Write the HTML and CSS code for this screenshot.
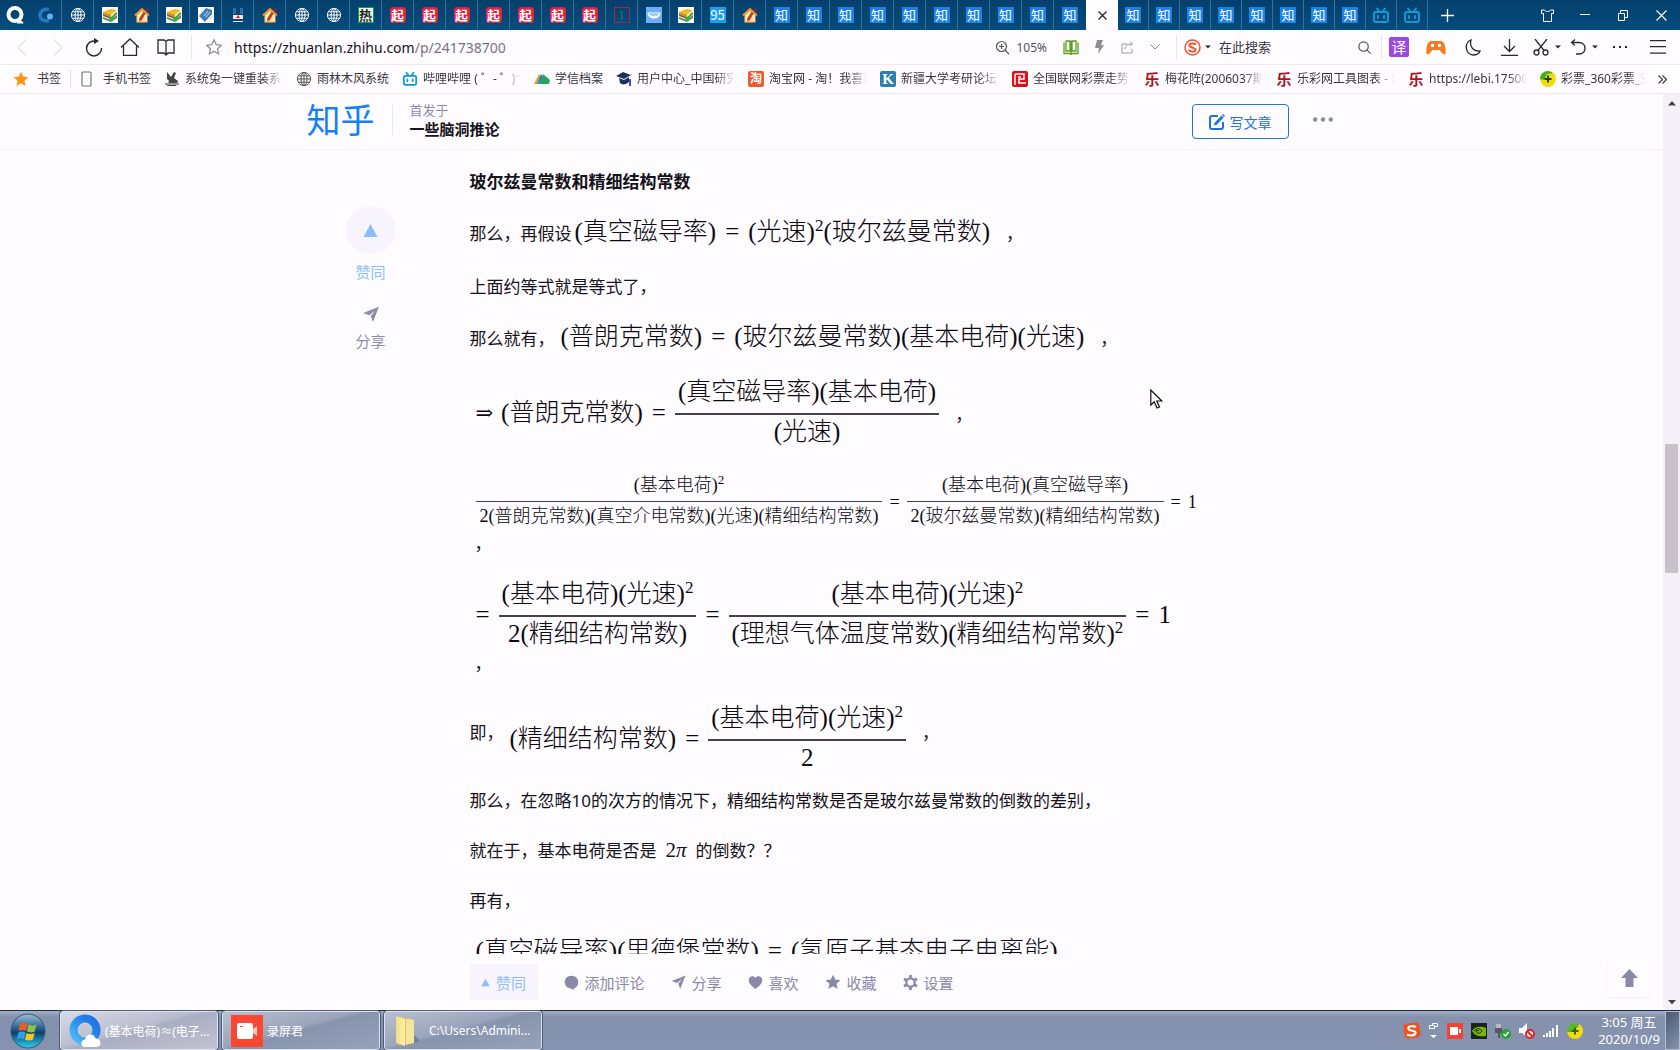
FILE: index.html
```
<!DOCTYPE html>
<html lang="zh-CN">
<head>
<meta charset="utf-8">
<title>一些脑洞推论 - 知乎</title>
<link rel="stylesheet" href="styles.css">
</head>
<body>
<svg class="defs" aria-hidden="true">
  <defs>
    <linearGradient id="orb" x1="0" y1="0" x2="0" y2="1"><stop offset="0" stop-color="#9fc0d8"/><stop offset=".45" stop-color="#1d5a8c"/><stop offset=".55" stop-color="#0d3f70"/><stop offset="1" stop-color="#29d3f5"/></linearGradient>
    <linearGradient id="ring" x1="0" y1="1" x2="1" y2="0"><stop offset="0" stop-color="#52c0f5"/><stop offset=".5" stop-color="#2b8df0"/><stop offset="1" stop-color="#1a6fe0"/></linearGradient>
    <linearGradient id="fold" x1="0" y1="0" x2="1" y2="0"><stop offset="0" stop-color="#f3dc83"/><stop offset="1" stop-color="#fff0b0"/></linearGradient>
  </defs>
  <symbol id="i-globe" viewBox="0 0 16 16"><g fill="none" stroke="currentColor" stroke-width="1"><circle cx="8" cy="8" r="6.600"/><ellipse cx="8" cy="8" rx="3" ry="6.600"/><path d="M8 1.400v13.200M1.400 8h13.200M2.400 4.800h11.200M2.400 11.200h11.200"/></g></symbol>
  <symbol id="i-books" viewBox="0 0 16 16"><path fill="#fff" d="M0 0h16v16H0z"/><path fill="#4f8f5a" d="M1 10l8 3 6-5v3l-6 4-8-3z"/><path fill="#8d5a35" d="M1 7l8 3 6-5v2l-6 5-8-3z"/><path fill="#f0bb25" d="M1 5l7-3 7 1-6 5z"/><path fill="#c98e18" d="M1 5l8 3v2L1 7z"/><path fill="none" stroke="#3cae3c" stroke-width="2" d="M7 10l2 3 5-7"/></symbol>
  <symbol id="i-house" viewBox="0 0 16 16"><path fill="#fff" stroke="#f08a1c" stroke-width="1.400" d="M3 8v7h10V8"/><path fill="#fbe6c0" d="M3 8l5-5 5 5v6.500H3z"/><path fill="none" stroke="#f39a1f" stroke-width="2" d="M1 8.500L8 2l7 6.500"/><path fill="#7a1d66" d="M12 1h3l-1 4-2-1z"/><path fill="#c23a12" d="M9.500 5l2 1.500-4 7L5 14l.5-3z"/></symbol>
  <symbol id="i-bili" viewBox="0 0 18 17"><g fill="none" stroke="currentColor" stroke-width="2" stroke-linecap="round"><rect x="2" y="5" width="14" height="10" rx="2"/><path d="M5 1.500L7 4M13 1.500L11 4M6 9v2M12 9v2"/></g></symbol>
  <symbol id="i-star" viewBox="0 0 16 16"><path d="M8 .8l2.200 4.800 5.200.6-3.900 3.500 1.100 5.200L8 12.300l-4.600 2.600 1.100-5.200L.6 6.200l5.200-.6z"/></symbol>
  <symbol id="i-plane" viewBox="0 0 16 16"><path d="M.6 6.500L15.500.6 9.800 15l-2-5.600L12 4.200 6.400 8.600z"/></symbol>
  <symbol id="i-search" viewBox="0 0 16 16"><g fill="none" stroke="currentColor" stroke-width="1.300"><circle cx="7" cy="7" r="5"/><path d="M10.600 10.600L14.500 14.500"/></g></symbol>
  <symbol id="i-up" viewBox="0 0 14 12"><path d="M7 0l6.500 12H.5z"/></symbol>
  <symbol id="i-caret" viewBox="0 0 8 5"><path d="M0 0h8L4 4.500z"/></symbol>
</svg>

<nav class="tabs" aria-label="标签页">
  <a class="home" href="#"><svg width="18" height="18" viewBox="0 0 18 18"><circle cx="9" cy="8.500" r="6.500" fill="none" stroke="#fff" stroke-width="4"/><path fill="#fff" d="M11 17.500c0-4 6-4 6.500 0z"/></svg></a>
  <a class="tab" href="#"><svg width="17" height="17" viewBox="0 0 17 17"><path fill="none" stroke="#2678c4" stroke-width="3.500" d="M12 2.500C7 1.500 3 4 3 8.500S7 14 12 14"/><circle cx="13" cy="9.500" r="3" fill="#5fb4f0"/></svg></a>
  <a class="tab" href="#"><svg width="16" height="16"><use href="#i-globe"/></svg></a>
  <a class="tab" href="#"><svg width="16" height="16"><use href="#i-books"/></svg></a>
  <a class="tab" href="#"><svg width="16" height="16"><use href="#i-house"/></svg></a>
  <a class="tab" href="#"><svg width="16" height="16"><use href="#i-books"/></svg></a>
  <a class="tab" href="#"><svg width="16" height="16" viewBox="0 0 16 16"><path fill="#fff" d="M0 0h16v16H0z"/><path fill="#3f7fb5" d="M1 9L8 1l6 2v4l-7 8z"/><path fill="none" stroke="#b9d6ec" d="M6 9l4-5M8 10l4-5M12 12l3-3"/></svg></a>
  <a class="tab" href="#"><svg width="16" height="16" viewBox="0 0 16 16"><path fill="#2b6ea8" d="M3 1h3v6H3zM10 1h3v6h-3z"/><path fill="#f3e6ea" d="M3 8h10v4H3zM3 14h10v1H3z"/><path fill="#d02030" d="M6 11l2-3 2 3z"/></svg></a>
  <a class="tab" href="#"><svg width="16" height="16"><use href="#i-house"/></svg></a>
  <a class="tab" href="#"><svg width="16" height="16"><use href="#i-globe"/></svg></a>
  <a class="tab" href="#"><svg width="16" height="16"><use href="#i-globe"/></svg></a>
  <a class="tab" href="#"><span class="fav hot">热</span></a>
  <a class="tab" href="#"><span class="fav qi">起</span></a>
  <a class="tab" href="#"><span class="fav qi">起</span></a>
  <a class="tab" href="#"><span class="fav qi">起</span></a>
  <a class="tab" href="#"><span class="fav qi">起</span></a>
  <a class="tab" href="#"><span class="fav qi">起</span></a>
  <a class="tab" href="#"><span class="fav qi">起</span></a>
  <a class="tab" href="#"><span class="fav qi">起</span></a>
  <a class="tab" href="#"><span class="fav one">1</span></a>
  <a class="tab" href="#"><svg width="16" height="16" viewBox="0 0 16 16"><path fill="#6bb0f5" d="M0 0h16v16H0z"/><path fill="#fff" d="M1.500 5.500h13c0 8-13 8-13 0z"/><path fill="none" stroke="#6bb0f5" d="M3 7h10M5 9l1-2 2 2 2-2 1 2"/></svg></a>
  <a class="tab" href="#"><svg width="16" height="16"><use href="#i-books"/></svg></a>
  <a class="tab" href="#"><span class="fav nf">95</span></a>
  <a class="tab" href="#"><svg width="16" height="16"><use href="#i-house"/></svg></a>
  <a class="tab" href="#"><span class="fav zh">知</span></a>
  <a class="tab" href="#"><span class="fav zh">知</span></a>
  <a class="tab" href="#"><span class="fav zh">知</span></a>
  <a class="tab" href="#"><span class="fav zh">知</span></a>
  <a class="tab" href="#"><span class="fav zh">知</span></a>
  <a class="tab" href="#"><span class="fav zh">知</span></a>
  <a class="tab" href="#"><span class="fav zh">知</span></a>
  <a class="tab" href="#"><span class="fav zh">知</span></a>
  <a class="tab" href="#"><span class="fav zh">知</span></a>
  <a class="tab last" href="#"><span class="fav zh">知</span></a>
  <button class="tab active" aria-label="关闭标签"><svg width="9" height="9" viewBox="0 0 9 9"><path stroke="#222" stroke-width="1.200" d="M.5.5l8 8M8.500.5l-8 8"/></svg></button>
  <a class="tab slim" href="#"><span class="fav zh">知</span></a>
  <a class="tab slim" href="#"><span class="fav zh">知</span></a>
  <a class="tab slim" href="#"><span class="fav zh">知</span></a>
  <a class="tab slim" href="#"><span class="fav zh">知</span></a>
  <a class="tab slim" href="#"><span class="fav zh">知</span></a>
  <a class="tab slim" href="#"><span class="fav zh">知</span></a>
  <a class="tab slim" href="#"><span class="fav zh">知</span></a>
  <a class="tab slim" href="#"><span class="fav zh">知</span></a>
  <a class="tab slim bili" href="#"><svg width="18" height="17"><use href="#i-bili"/></svg></a>
  <a class="tab slim bili" href="#"><svg width="18" height="17"><use href="#i-bili"/></svg></a>
  <button class="win" aria-label="新标签"><svg width="13" height="13" viewBox="0 0 13 13"><path stroke="#fff" stroke-width="1.300" d="M6.500 0v13M0 6.500h13"/></svg></button>
  <span class="grow"></span>
  <button class="win" aria-label="皮肤"><svg width="13" height="13" viewBox="0 0 13 13"><path fill="none" stroke="#fff" d="M.5 1h3c1 2 5 2 6 0h3v3.500h-2v8h-8v-8h-2z"/></svg></button>
  <button class="win" aria-label="最小化"><svg width="10" height="2"><path fill="#fff" d="M0 0h10v1H0z"/></svg></button>
  <button class="win" aria-label="还原"><svg width="10" height="11" viewBox="0 0 10 11"><path fill="none" stroke="#fff" d="M.5 3.500h6v7h-6zM2.500 3.500v-3h7v7h-3"/></svg></button>
  <button class="win" aria-label="关闭"><svg width="11" height="11" viewBox="0 0 11 11"><path stroke="#fff" stroke-width="1.200" d="M.5.5l10 10M10.500.5l-10 10"/></svg></button>
</nav>

<div class="address">
  <button class="nav off" aria-label="后退"><svg width="10" height="17" viewBox="0 0 10 17"><path fill="none" stroke="currentColor" d="M9 .5l-8 8 8 8"/></svg></button>
  <button class="nav off" aria-label="前进"><svg width="10" height="17" viewBox="0 0 10 17"><path fill="none" stroke="currentColor" d="M1 .5l8 8-8 8"/></svg></button>
  <button class="nav" aria-label="刷新"><svg width="18" height="19" viewBox="0 0 18 19"><path fill="none" stroke="currentColor" stroke-width="1.400" d="M10 3A7.500 7.500 0 1 0 16.500 10"/><path d="M9 0l5 3-5 3z"/></svg></button>
  <button class="nav" aria-label="主页"><svg width="20" height="18" viewBox="0 0 20 18"><path fill="none" stroke="currentColor" stroke-width="1.300" d="M1 9.500L10 1l9 8.500M3.500 8v9.300h13V8"/></svg></button>
  <button class="nav" aria-label="书签"><svg width="18" height="17" viewBox="0 0 18 17"><path fill="none" stroke="currentColor" stroke-width="1.300" d="M1 1h6l2 1.500L11 1h6v13h-6l-2 2-2-2H1zM9 2.500V16"/></svg></button>
  <span class="rule"></span>
  <button class="fave" aria-label="收藏"><svg width="16" height="16" fill="none" stroke="#8c8a92" stroke-width="1.200"><use href="#i-star"/></svg></button>
  <a class="url" href="#"><span>https://zhuanlan.zhihu.com</span>/p/241738700</a>
  <button class="zoom"><svg width="15" height="15" viewBox="0 0 15 15"><g fill="none" stroke="#555" stroke-width="1.200"><circle cx="6.500" cy="6.500" r="5"/><path d="M10 10l4 4M4 6.500h5M6.500 4v5"/></g></svg>105%</button>
  <button class="tool" aria-label="阅读"><svg width="16" height="15" viewBox="0 0 16 15"><path fill="none" stroke="#5b9f1e" stroke-width="1.300" d="M3 1h4v10H3zM9 1h4v10H9zM1 2.500v11h6l1 1 1-1h6v-11M8 1v12"/></svg></button>
  <button class="tool" aria-label="极速"><svg width="9" height="14" viewBox="0 0 9 14"><path fill="#8f8b92" d="M2 0h6L6 5h3L3 14l1-6H0z"/></svg></button>
  <button class="tool" aria-label="分享"><svg width="13" height="13" viewBox="0 0 13 13"><path fill="none" stroke="#9a979e" d="M6 3H1v9h10V8M4 8c0-4 3-5 7-5M9 .5L11.500 3 9 5.500"/></svg></button>
  <button class="tool" aria-label="更多"><svg width="10" height="6" viewBox="0 0 10 6"><path fill="none" stroke="#8a878e" d="M.5.5L5 5 9.500.5"/></svg></button>
  <span class="rule"></span>
  <button class="sogou" aria-label="搜索引擎"><svg width="17" height="17" viewBox="0 0 17 17"><circle cx="8.500" cy="8.500" r="7.500" fill="none" stroke="#f0562d" stroke-width="1.500"/><path fill="none" stroke="#f0562d" stroke-width="2" d="M12 5.500C9 3.500 5 4.500 5.500 6.800S12 8.500 11.500 11 7 13 4.500 11"/></svg><svg width="6" height="4" viewBox="0 0 8 5"><use href="#i-caret"/></svg></button>
  <input class="search" type="text" aria-label="搜索" placeholder="在此搜索">
  <button class="tool" aria-label="搜索"><svg width="15" height="15"><use href="#i-search"/></svg></button>
  <span class="rule tight"></span>
  <button class="ext" aria-label="翻译"><span class="yi">译</span></button>
  <button class="ext" aria-label="游戏"><svg width="20" height="15" viewBox="0 0 20 15"><path fill="#f47c20" d="M5 1h10c4 1 5 7 4.500 13-3 1-4-2-6-4h-7c-2 2-3 5-6 4C0 8 1 2 5 1z"/><path fill="#fff" d="M5 4h3v3H5zM12 4h3v3h-3z"/></svg></button>
  <button class="ext" aria-label="夜间"><svg width="16" height="17" viewBox="0 0 16 17"><path fill="none" stroke="currentColor" stroke-width="1.300" d="M6 1C-1 4 0 15 8 16c3 0 6-1 7-4C9 13 4 8 6 1z"/></svg></button>
  <button class="ext" aria-label="下载"><svg width="17" height="17" viewBox="0 0 17 17"><path fill="none" stroke="currentColor" stroke-width="1.300" d="M8.500 0v12M3 7l5.500 5.500L14 7M0 16.300h17"/></svg></button>
  <button class="ext" aria-label="截图"><svg width="16" height="17" viewBox="0 0 16 17"><g fill="none" stroke="currentColor" stroke-width="1.300"><path d="M2 0l9.500 12M14 0L4.500 12"/><circle cx="3.500" cy="13.500" r="2.500"/><circle cx="12.500" cy="13.500" r="2.500"/></g></svg><svg width="6" height="4" viewBox="0 0 8 5"><use href="#i-caret"/></svg></button>
  <button class="ext" aria-label="恢复"><svg width="16" height="16" viewBox="0 0 16 16"><path fill="none" stroke="currentColor" stroke-width="1.300" d="M2 3.500h7c8 0 8 11.500 0 11.500H6M5 .5l-3.500 3 3.500 3"/></svg><svg width="6" height="4" viewBox="0 0 8 5"><use href="#i-caret"/></svg></button>
  <button class="ext" aria-label="更多"><svg width="15" height="3" viewBox="0 0 15 3"><path d="M0 0h2v2H0zM6 0h2v2H6zM12 0h2v2h-2z"/></svg></button>
  <button class="ext" aria-label="菜单"><svg width="16" height="14" viewBox="0 0 16 14"><path d="M0 0h16v1.300H0zM0 6h16v1.300H0zM0 12.500h16v1.300H0z"/></svg></button>
</div>

<nav class="marks" aria-label="书签栏">
  <a class="mark first" href="#"><svg width="16" height="16" fill="#ff9412"><use href="#i-star"/></svg><span>书签</span></a>
  <a class="mark phone" href="#"><svg width="16" height="16" viewBox="0 0 16 16"><rect x="4" y="1" width="9" height="14" rx="1" fill="none" stroke="#777" stroke-width="1.200"/></svg><span>手机书签</span></a>
  <a class="mark" href="#"><svg width="16" height="16" viewBox="0 0 16 16"><path fill="#444" d="M3 1l4 5 3-5 2 1-2 5 4 3-2 5H3l2-5-2-2z"/><path fill="#999" d="M1 12h14v2H1z"/></svg><span class="fade">系统兔一键重装系统</span></a>
  <a class="mark" href="#"><svg width="16" height="16" color="#555"><use href="#i-globe"/></svg><span>雨林木风系统</span></a>
  <a class="mark" href="#"><svg width="16" height="16" color="#0d9bd6"><use href="#i-bili"/></svg><span class="fade">哔哩哔哩 ( ゜- ゜)つロ</span></a>
  <a class="mark" href="#"><svg width="16" height="16" viewBox="0 0 16 16"><path fill="#e5a52c" d="M0 13L5 3l2 2-4 8z"/><path fill="#3c78c0" d="M3 13L7 3l2 3-4 7z"/><path fill="#25a468" d="M5 13L9 3l7 6-1 4z"/></svg><span>学信档案</span></a>
  <a class="mark" href="#"><svg width="16" height="16" viewBox="0 0 16 16"><path fill="#1d3357" d="M0 5l7-4 8 3-7 4zM3 7l5 2 5-3v5c-3 3-7 3-9 1z"/><path fill="#3a4fd0" d="M13 8h2v7h-2z"/></svg><span class="fade">用户中心_中国研究生</span></a>
  <a class="mark" href="#"><span class="chip tao">淘</span><span class="fade">淘宝网 - 淘！我喜欢</span></a>
  <a class="mark" href="#"><span class="chip kk">K</span><span class="fade">新疆大学考研论坛_新</span></a>
  <a class="mark" href="#"><svg width="16" height="16" viewBox="0 0 16 16"><rect width="16" height="16" rx="2" fill="#d81118"/><path fill="none" stroke="#fff" stroke-width="1.500" d="M3 14V4q0-1 1-1h8v5H7v4h7M6 6h3"/></svg><span class="fade">全国联网彩票走势图</span></a>
  <a class="mark" href="#"><span class="chip le">乐</span><span class="fade">梅花阵(2006037期)</span></a>
  <a class="mark" href="#"><span class="chip le">乐</span><span class="fade">乐彩网工具图表 - 乐</span></a>
  <a class="mark" href="#"><span class="chip le">乐</span><span class="fade">https://lebi.17500.cn</span></a>
  <a class="mark" href="#"><svg width="16" height="16" viewBox="0 0 16 16"><circle cx="8" cy="8" r="8" fill="#f5d90a"/><path fill="#3fae2a" d="M8 0a8 8 0 0 0-8 8l4 1 3-6 6-.8A8 8 0 0 0 8 0z"/><path stroke="#14471a" stroke-width="2" d="M8 4.500v7M4.500 8h7"/></svg><span class="fade short">彩票_360彩票_安全</span></a>
  <button class="more" aria-label="更多书签"><svg width="9" height="9" viewBox="0 0 9 9"><path fill="none" stroke="#333" stroke-width="1.100" d="M.5.500l4 4-4 4M4.500.5l4 4-4 4"/></svg></button>
</nav>

<div class="view">
  <div class="page">
    <header class="top">
      <div class="inner">
        <a class="logo" href="#">知乎</a>
        <div class="column"><span>首发于</span><a href="#">一些脑洞推论</a></div>
        <span class="grow"></span>
        <button class="write"><svg width="16" height="16" viewBox="0 0 16 16"><path fill="none" stroke="currentColor" stroke-width="2" d="M9 2H3Q1 2 1 4v9q0 2 2 2h9q2 0 2-2V8"/><path d="M12.500 1.500l2 2L7.500 11 5 11.500l.5-2.500zM14 0l2 2-1 1-2-2z" fill="currentColor"/></svg>写文章</button>
        <button class="dots" aria-label="更多"><svg width="20" height="5" viewBox="0 0 20 5" fill="#8f8ba0"><circle cx="2.200" cy="2.500" r="2.200"/><circle cx="10" cy="2.500" r="2.200"/><circle cx="17.800" cy="2.500" r="2.200"/></svg></button>
      </div>
    </header>

    <main class="body">
      <aside class="side">
        <button class="vote"><span class="disc"><svg width="15" height="13"><use href="#i-up"/></svg></span>赞同</button>
        <button class="share"><svg width="18" height="17"><use href="#i-plane"/></svg>分享</button>
      </aside>
      <article class="text">
        <h3>玻尔兹曼常数和精细结构常数</h3>
        <p class="line">那么，再假设<span class="math near">(真空磁导率)<i>=</i>(光速)<sup>2</sup>(玻尔兹曼常数)</span>，</p>
        <p>上面约等式就是等式了，</p>
        <p class="line">那么就有，<span class="math">(普朗克常数)<i>=</i>(玻尔兹曼常数)(基本电荷)(光速)</span>，</p>
        <p><span class="math roomy"><b>⇒</b>(普朗克常数)<i>=</i><span class="frac"><span>(真空磁导率)(基本电荷)</span><span>(光速)</span></span></span>，</p>
        <p class="wide"><span class="math small"><span class="frac"><span>(基本电荷)<sup>2</sup></span><span>2(普朗克常数)(真空介电常数)(光速)(精细结构常数)</span></span><i>=</i><span class="frac"><span>(基本电荷)(真空磁导率)</span><span>2(玻尔兹曼常数)(精细结构常数)</span></span><i>=</i>1</span><span class="tail">，</span></p>
        <p class="wide"><span class="math lead"><i>=</i><span class="frac"><span>(基本电荷)(光速)<sup>2</sup></span><span>2(精细结构常数)</span></span><i>=</i><span class="frac"><span>(基本电荷)(光速)<sup>2</sup></span><span>(理想气体温度常数)(精细结构常数)<sup>2</sup></span></span><i>=</i>1</span><span class="tail">，</span></p>
        <p class="drop">即，<span class="math">(精细结构常数)<i>=</i><span class="frac"><span>(基本电荷)(光速)<sup>2</sup></span><span>2</span></span></span>，</p>
        <p>那么，在忽略10的次方的情况下，精细结构常数是否是玻尔兹曼常数的倒数的差别，</p>
        <p>就在于，基本电荷是否是<span class="pi">2<em>π</em></span>的倒数？？</p>
        <p>再有，</p>
        <p class="line"><span class="math">(真空磁导率)(里德堡常数)<i>=</i>(氢原子基态电子电离能)</span>，</p>
      </article>
      <svg class="cursor" width="13" height="20" viewBox="0 0 13 20"><path fill="#fff" stroke="#111" stroke-width="1.200" d="M.8 1v15l3.500-3.300L7 19l2.500-1-2.700-6h5z"/></svg>
    </main>

    <footer class="actions">
      <div class="bar">
        <button class="agree"><svg width="9" height="9"><use href="#i-up"/></svg>赞同</button>
        <button><svg width="15" height="15" viewBox="0 0 16 16"><path d="M8 .8C3.500.8.800 4 .8 7.500S3 14 7 14.500l3.500 1.300.3-1.500C14 13 15.200 10.500 15.200 7.500 15.200 4 12.500.8 8 .8z"/></svg>添加评论</button>
        <button><svg width="15" height="15"><use href="#i-plane"/></svg>分享</button>
        <button><svg width="15" height="15" viewBox="0 0 16 16"><path d="M8 15C3 11 .8 8.500.8 5.200.8 1 6 0 8 3c2-3 7.200-2 7.200 2.200C15.200 8.500 13 11 8 15z"/></svg>喜欢</button>
        <button><svg width="16" height="16"><use href="#i-star"/></svg>收藏</button>
        <button><svg width="15" height="15" viewBox="0 0 16 16"><circle cx="8" cy="8" r="4.500" fill="none" stroke="currentColor" stroke-width="2.400"/><path d="M6.500 0h3v3h-3zM6.500 13h3v3h-3zM.3 5.300l1.500-2.600 2.600 1.500-1.500 2.600zM11.600 11.800l1.500-2.600 2.600 1.500-1.500 2.600zM1.800 13.300L.3 10.700l2.600-1.500 1.500 2.600zM13.100 6.800l-1.500-2.600 2.600-1.500 1.500 2.600z"/></svg>设置</button>
      </div>
      <button class="totop" aria-label="回到顶部"><svg width="17" height="18" viewBox="0 0 17 18"><path d="M8.500 0L17 9h-4.500v9h-8V9H0z"/></svg></button>
    </footer>
  </div>
  <div class="scroll"><svg width="8" height="5" viewBox="0 0 8 5"><path d="M4 0l4 4.500H0z"/></svg><span class="before"></span><span class="thumb"></span><span class="after"></span><svg width="8" height="5"><use href="#i-caret"/></svg></div>
</div>

<div class="taskbar">
  <button class="start" aria-label="开始"><svg width="36" height="36" viewBox="0 0 36 36"><circle cx="18" cy="18" r="17" fill="url(#orb)" stroke="#38536f"/><path fill="#ee5a24" d="M10 11c3-2 5-1 7.500 0l-1.500 7c-3-1.500-5-1.500-7.500 0z"/><path fill="#8cc63f" d="M18.500 11.500c3 1.500 5 1.500 8 0l-1.800 7c-3 1.500-5 1-7.700 0z"/><path fill="#2fa0e8" d="M8.200 19.500c3-1.500 5-1.500 7.500 0l-1.700 6.500c-2.500-1-4.500-1-7 .5z"/><path fill="#fbc61a" d="M16.700 20c2.500 1 5 1.500 8 0l-1.800 6.500c-3 1.500-5.500 1-8 0z"/></svg></button>
  <button class="task on"><svg width="32" height="34" viewBox="0 0 32 34"><circle cx="16" cy="16" r="11.500" fill="none" stroke="url(#ring)" stroke-width="8"/><path fill="#fff" d="M16 33c-5 0-5-7 0-7.500 1-6 9-7 10.500-1 6-.5 7 8.500 1 8.500z"/></svg><span>(基本电荷)≈(电子...</span></button>
  <button class="task"><svg width="32" height="32" viewBox="0 0 32 32"><path fill="#fb4632" d="M0 0h32v32H0z"/><rect x="6" y="8" width="16" height="16" rx="2" fill="#fff"/><path fill="#fbc5bd" d="M22 14l4-3v10l-4-3z"/><path fill="#fb4632" d="M9 11h3v1H9z"/></svg><span>录屏君</span></button>
  <button class="task wide-gap"><svg width="28" height="32" viewBox="0 0 28 32"><path fill="#57627a" opacity=".5" d="M14 30l13-4-5-6z"/><path fill="#e4c45c" d="M6 2l13 2v24L6 30z"/><path fill="url(#fold)" d="M3 1l9 3v27l-9-3z"/><path fill="#f7e49a" d="M13 4l8 1v23l-8 2z"/></svg><span>C:\Users\Admini...</span></button>
  <span class="grow"></span>
  <div class="tray">
    <svg width="18" height="18" viewBox="0 0 18 18"><rect x="1" y="1" width="16" height="15" rx="3" fill="#f2501f" transform="rotate(-8 9 9)"/><path fill="none" stroke="#fff" stroke-width="2.200" d="M13 5C9 3 4.500 4.500 5.500 7s7.500 1 7 4-6 3-8.500 1.500"/></svg>
    <svg width="10" height="18" viewBox="0 0 10 18"><path fill="none" stroke="#fff" d="M.5 3.500h5v3h-5zM3.500 3.500v-2h5v3h-3"/><path fill="#fff" d="M1 13h7l-3.500 3z"/></svg>
    <svg width="16" height="16" viewBox="0 0 16 16"><path fill="#f2442f" d="M0 0h16v16H0z"/><path fill="#fff" d="M3 4h8v8H3zM12 6h2v4h-2z"/></svg>
    <svg width="16" height="16" viewBox="0 0 16 16"><path fill="#1c2418" d="M0 0h16v16H0z"/><path fill="#76b900" d="M1 8c3-5 9-5 14-3v8C9 14 4 13 1 8z"/><path fill="none" stroke="#1c2418" d="M3 8c3-3 6-3 8 0-2 3-5 3-6 0 1-1 3-1 3 0"/></svg>
    <svg width="16" height="16" viewBox="0 0 16 16"><path fill="#b9bcc2" d="M1 1h5v4H1z"/><path fill="#555b66" d="M0 5h7v5H5v5H3v-5H0z"/><circle cx="11" cy="11" r="5" fill="#27a333"/><path fill="none" stroke="#fff" stroke-width="1.400" d="M8.500 11l2 2 3-4"/></svg>
    <svg width="16" height="16" viewBox="0 0 16 16"><path fill="#fff" d="M0 5h3l5-5v14l-5-4H0z"/><circle cx="11" cy="11" r="4" fill="#fff" stroke="#e02424" stroke-width="2"/><path stroke="#e02424" stroke-width="2" d="M8 8l6 6"/></svg>
    <svg width="16" height="14" viewBox="0 0 16 14"><path fill="#fff" d="M0 11h2v2H0zM3 9h2v4H3zM6 7h2v6H6zM9 4h2v9H9zM13 1h2v12h-2z"/></svg>
    <svg width="16" height="16" viewBox="0 0 16 16"><circle cx="8" cy="8" r="8" fill="#f5d90a"/><path fill="#57b52f" d="M0 9a8 8 0 0 1 12-8l-1 3-7 5z"/><path stroke="#2a6a1a" stroke-width="2" d="M8 4.500v7M4.500 8h7"/></svg>
  </div>
  <div class="clock"><time>3:05 周五</time><time>2020/10/9</time></div>
  <button class="desktop" aria-label="显示桌面"></button>
</div>
</body>
</html>
```
FILE: styles.css
```
* { box-sizing: border-box; }

body {
  margin: 0;
  height: 100vh;
  display: flex;
  flex-direction: column;
  overflow: hidden;
  background: #fefcff;
  color: #16131a;
  font-family: "Noto Sans", "Noto Sans CJK SC", sans-serif;
  font-size: 12px;
}

a { color: inherit; text-decoration: none; }

button {
  margin: 0;
  padding: 0;
  border: 0;
  background: none;
  color: inherit;
  font: inherit;
  fill: currentColor;
  display: flex;
  align-items: center;
  justify-content: center;
}

svg { display: block; flex: none; }

.defs { position: absolute; width: 0; height: 0; }
.grow { flex: 1; }

/* tab strip */
.tabs {
  display: flex;
  flex: none;
  height: 30px;
  background: linear-gradient(#043f6c, #064d7f);
  color: #fff;
}
.home { width: 30px; display: flex; align-items: center; justify-content: center; }
.tab {
  width: 32px;
  display: flex;
  align-items: center;
  justify-content: center;
  border-right: 1px solid #3a7099;
}
.tab.last { border-right: 0; }
.tab.slim { width: 31px; }
.tab.active { background: #fefcff; border: 0; }
.bili { color: #0d9bd6; }
.fav {
  width: 16px;
  height: 16px;
  line-height: 16px;
  font-size: 13px;
  text-align: center;
  font-family: "Noto Sans CJK SC", sans-serif;
}
.zh { background: #1c82e6; }
.qi { background: #e02040; border-radius: 3px; font-weight: 700; }
.hot { background: #e8f5ea; color: #1b2a20; font-weight: 700; outline: 1px solid #20915a; outline-offset: -1px; }
.one { color: #2d7a58; outline: 1px solid #a32846; outline-offset: -1px; font-family: "Liberation Serif", serif; }
.nf { background: #1a9ef0; }
.win { width: 38px; }

/* address row */
.address {
  display: flex;
  align-items: center;
  flex: none;
  height: 35px;
  padding: 0 4px;
  border-bottom: 1px solid #f0e8f0;
  color: #2b282e;
}
.nav { width: 36px; }
.nav.off { color: #cfc8d0; }
.rule { width: 1px; height: 24px; background: #ece4ec; margin: 0 7px; }
.rule.tight { margin-left: 3px; }
.fave { width: 30px; }
.url { flex: 1; padding-left: 5px; font-size: 14px; color: #77737c; }
.url span { color: #16131a; }
.zoom { gap: 6px; margin-right: 10px; color: #55515a; }
.tool { width: 28px; color: #55515a; }
.sogou { gap: 4px; }
.search {
  width: 131px;
  margin-left: 8px;
  padding: 0;
  border: 0;
  outline: 0;
  background: none;
  font: inherit;
  font-size: 13px;
}
.search::placeholder { color: #38353c; opacity: 1; }
.ext { width: 37px; gap: 6px; }
.rule + .ext { width: 20px; margin-right: 8px; }
.yi {
  width: 20px;
  height: 20px;
  line-height: 20px;
  border-radius: 2px;
  background: #9b46e8;
  color: #fff;
  font-size: 15px;
}

/* bookmarks */
.marks {
  display: flex;
  align-items: center;
  flex: none;
  height: 29px;
  padding: 0 14px 0 13px;
  gap: 13px;
  border-bottom: 1px solid #f0e6f0;
  color: #38353c;
}
.mark { display: flex; align-items: center; gap: 5px; white-space: nowrap; line-height: 18px; }
.mark.first { gap: 8px; padding-right: 9px; border-right: 1px solid #e2dce4; margin-right: -6px; }
.mark.phone { gap: 9px; }
.fade {
  width: 98px;
  overflow: hidden;
  -webkit-mask-image: linear-gradient(90deg, #000 80%, transparent);
  mask-image: linear-gradient(90deg, #000 80%, transparent);
}
.fade.short { width: 84px; }
.more { margin-left: auto; }
.chip { width: 16px; height: 16px; line-height: 16px; text-align: center; border-radius: 2px; font-weight: 700; }
.tao { background: #ee5a2a; color: #fff; }
.kk { background: #2a7fae; color: #fff; font-size: 15px; font-family: "Liberation Serif", serif; }
.le { color: #b01020; font-size: 15px; }

/* web page */
.view { display: flex; flex: 1; min-height: 0; }
.page { flex: 1; min-width: 0; display: flex; flex-direction: column; }
.top { flex: none; height: 56px; border-bottom: 1px solid #f4f0f5; }
.inner {
  max-width: 1050px;
  height: 100%;
  margin: 0 auto;
  padding-right: 24px;
  display: flex;
  align-items: center;
}
.logo, .column, .dots { margin-bottom: 4px; }
.logo {
  color: #1480f5;
  font-size: 34px;
  line-height: 30px;
  padding-right: 17px;
  border-right: 1px solid #ebe6ef;
}
.column { display: flex; flex-direction: column; padding-left: 17px; font-size: 13px; line-height: 18px; color: #8f8bab; }
.column a { color: #16131a; font-size: 15px; line-height: 20px; font-weight: 700; }
.write {
  width: 97px;
  height: 35px;
  margin-right: 24px;
  gap: 5px;
  border: 1px solid #1a74dc;
  border-radius: 4px;
  color: #1a74dc;
  font-size: 14px;
}

.body {
  position: relative;
  flex: 1;
  min-height: 0;
  overflow: hidden;
  display: grid;
  grid-template-columns: 1fr 726px 1fr;
}
.side { justify-self: end; margin: 56px 72px 0 0; color: #8f8bab; font-size: 15px; line-height: 20px; }
.side button { flex-direction: column; width: 52px; }
.vote { gap: 8px; color: #8cbcff; }
.disc { width: 50px; height: 48px; border-radius: 50%; background: #f7f4fd; display: flex; align-items: center; justify-content: center; }
.share { gap: 8px; margin-top: 24px; }

.text { padding: 18px 0 0 1px; font-size: 17px; line-height: 27px; }
.text h3 { margin: 0 0 23px; font-size: 17px; line-height: 27px; font-weight: 700; }
.text p { display: flex; align-items: center; margin: 0 0 23px; white-space: nowrap; }
.text .line { height: 32px; padding-bottom: 2px; }
.text .wide { flex-wrap: wrap; }
.math {
  display: flex;
  align-items: center;
  margin: 0 16px 0 6px;
  font-family: "Liberation Serif", "Noto Sans CJK SC", serif;
  font-size: 25px;
  font-weight: 300;
  line-height: 28px;
  color: #0c0a10;
}
.line .math { padding-bottom: 3px; }
.math.near { margin-left: 3px; }
.math.roomy { margin-bottom: 2px; }
.math i { font-style: normal; margin: 0 9px; }
.math b { font-weight: 300; font-size: 21px; margin-right: 8px; font-family: "DejaVu Serif", serif; }
.math sup { font-size: 17px; line-height: 0; }
.math > sup { align-self: flex-start; line-height: 16px; }
.lead > i:first-child { margin-left: 0; }
.frac { display: flex; flex-direction: column; align-items: center; }
.frac > span { padding: 0 3px 7px; }
.frac > span + span { align-self: stretch; text-align: center; padding: 3px 3px 2px; border-top: 2px solid #45424a; }
.small { font-size: 18px; line-height: 24px; }
.small i { margin: 0 7px; }
.small sup { font-size: 13px; }
.small .frac > span { padding: 0 4px 4px; }
.small .frac > span + span { padding: 2px 4px; border-top-width: 1px; }
.tail { padding-left: 5px; }
.drop .math { margin-top: 4px; margin-bottom: -10px; }
.pi { font-family: "Liberation Serif", serif; font-size: 21px; margin: 0 9px; }

.cursor { position: absolute; left: calc(50% + 318px); top: 239px; }

.actions {
  flex: none;
  height: 56px;
  display: grid;
  grid-template-columns: 1fr 726px 1fr;
  align-items: start;
  color: #8a89a8;
  font-size: 15px;
}
.bar { grid-column: 2; display: flex; align-items: center; gap: 26px; padding: 10px 0 0 1px; }
.bar button { gap: 6px; height: 36px; }
.bar .agree { width: 68px; color: #8cbcff; background: #f8f5fe; border-radius: 3px; }
.totop {
  justify-self: end;
  margin: 5px 13px 0 0;
  width: 42px;
  height: 38px;
  border-radius: 3px;
  box-shadow: 0 1px 2px #f4ecf6;
}

.scroll {
  flex: none;
  width: 17px;
  padding: 7px 2px 5px;
  background: #f5eff7;
  fill: #45424a;
  display: flex;
  flex-direction: column;
  align-items: center;
}
.before { flex: 338; }
.thumb { flex: 128; align-self: stretch; background: #c8c1c9; }
.after { flex: 427; }

/* taskbar */
.taskbar {
  flex: none;
  height: 40px;
  display: flex;
  align-items: stretch;
  gap: 4px;
  background: linear-gradient(#a3afc4, #8492ae 6px, #8593b0);
  border-top: 1px solid #1d2c45;
  color: #fff;
}
.start { width: 56px; }
.task {
  width: 158px;
  padding-left: 8px;
  gap: 4px;
  justify-content: flex-start;
  border: 1px solid #dfe3ee;
  border-radius: 3px;
  background: linear-gradient(165deg, #b9bfd0, #9aa4bb 45%, #8794ae 50%, #97a2ba);
  outline: 1px solid #4b5b78;
  outline-offset: 0;
}
.task.on { background: linear-gradient(165deg, #d9d9e6, #b9bdcd 45%, #a9aec2 50%, #c3c2d3); }
.task span { font-size: 12px; white-space: nowrap; }
.task.wide-gap { gap: 8px; }
.tray { display: flex; align-items: center; gap: 8px; margin-right: 10px; }
.clock { width: 64px; display: flex; flex-direction: column; align-items: center; justify-content: center; font-size: 13px; line-height: 17px; }
.desktop { width: 15px; border: 1px solid #b4bed0; background: linear-gradient(135deg, #4b5a72, #8492ae); }
```
